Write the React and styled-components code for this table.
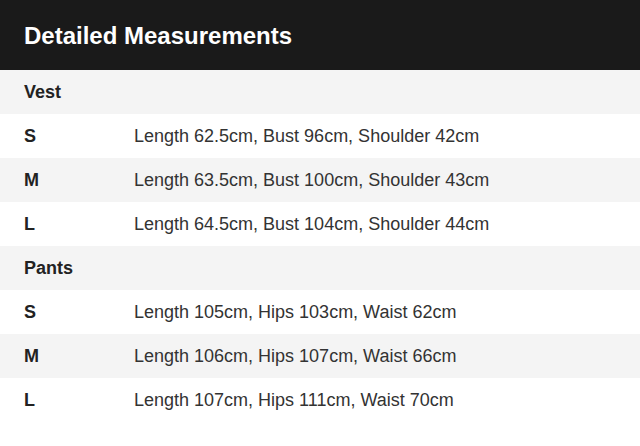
import React from "react";
import styled, { createGlobalStyle } from "styled-components";

const Global = createGlobalStyle`
  html, body { margin: 0; padding: 0; background: #ffffff; }
  body { font-family: "Liberation Sans", Arial, sans-serif; }
  *, *::before, *::after { box-sizing: border-box; }
`;

const Page = styled.div`
  width: 640px;
`;

const Header = styled.header`
  height: 70px;
  background: #1a1a1a;
  display: flex;
  align-items: center;
  padding: 1px 24px 0;
`;

const Title = styled.h1`
  margin: 0;
  color: #ffffff;
  font-size: 24px;
  font-weight: 700;
`;

const Row = styled.div`
  height: 44px;
  display: grid;
  grid-template-columns: 110px 1fr;
  align-items: center;
  padding: 1px 24px 0;
  background: ${(p) => (p.$shade ? "#f4f4f4" : "#ffffff")};
`;

const Label = styled.div`
  font-size: 18px;
  font-weight: 700;
  color: #222222;
`;

const Value = styled.div`
  font-size: 18px;
  color: #333333;
`;

const groups = [
  {
    name: "Vest",
    rows: [
      ["S", "Length 62.5cm, Bust 96cm, Shoulder 42cm"],
      ["M", "Length 63.5cm, Bust 100cm, Shoulder 43cm"],
      ["L", "Length 64.5cm, Bust 104cm, Shoulder 44cm"],
    ],
  },
  {
    name: "Pants",
    rows: [
      ["S", "Length 105cm, Hips 103cm, Waist 62cm"],
      ["M", "Length 106cm, Hips 107cm, Waist 66cm"],
      ["L", "Length 107cm, Hips 111cm, Waist 70cm"],
    ],
  },
];

export default function App() {
  return (
    <Page>
      <Global />
      <Header>
        <Title>Detailed Measurements</Title>
      </Header>
      {groups.map((g) => (
        <React.Fragment key={g.name}>
          <Row $shade>
            <Label>{g.name}</Label>
          </Row>
          {g.rows.map(([size, text], i) => (
            <Row key={size} $shade={i % 2 === 1}>
              <Label>{size}</Label>
              <Value>{text}</Value>
            </Row>
          ))}
        </React.Fragment>
      ))}
    </Page>
  );
}
